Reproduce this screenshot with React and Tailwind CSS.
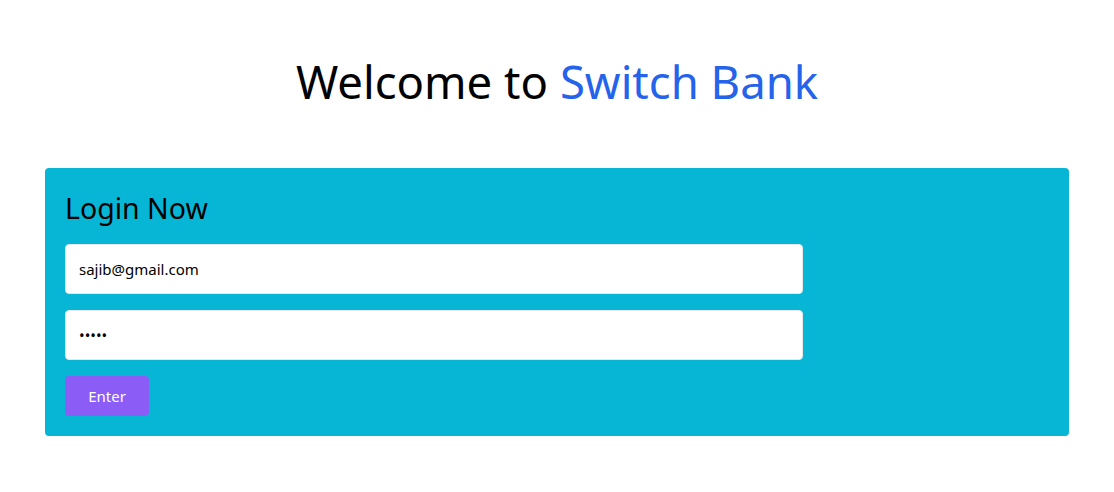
export default function App() {
  return (
    <div className="min-h-screen bg-white" style={{ fontFamily: '"Noto Sans", "Open Sans", sans-serif' }}>
      <h1 className="pt-[49px] pb-[55px] text-center text-[45.5px] leading-[64px] font-normal text-black">
        Welcome to <span className="text-[#2563eb]">Switch Bank</span>
      </h1>
      <div className="mx-auto w-[1024px] rounded bg-[#07b6d5] p-5">
        <h2 className="text-[28.5px] leading-[40px] text-black mb-[16px]">Login Now</h2>
        <form className="flex flex-col gap-4" onSubmit={(e) => e.preventDefault()}>
          <input
            type="email"
            defaultValue="sajib@gmail.com"
            className="w-[738px] h-[50px] rounded bg-white px-[13px] text-[15px] text-black outline-none border border-gray-200"
          />
          <input
            type="password"
            defaultValue="12345"
            className="w-[738px] h-[50px] rounded bg-white px-[13px] text-[15px] text-black outline-none border border-gray-200"
          />
          <div>
            <button className="w-[84px] h-[40px] rounded bg-[#8b5cf6] text-[15px] text-white">Enter</button>
          </div>
        </form>
      </div>
    </div>
  );
}
